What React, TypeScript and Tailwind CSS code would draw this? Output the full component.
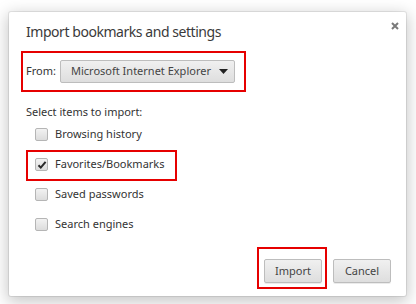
import React from "react";

const font = { fontFamily: '"Noto Sans", "Open Sans", sans-serif' };

function Checkbox({ checked }: { checked?: boolean }) {
  return (
    <div className="relative w-[13px] h-[13px] rounded-[2px] border border-[#b5b5b5] bg-gradient-to-b from-[#f2f2f2] to-[#dcdcdc] shrink-0">
      {checked && (
        <svg className="absolute left-[1px] top-[1px]" width="10" height="10" viewBox="0 0 10 10">
          <path d="M1.5 5.2 L3.8 7.6 L8.6 1.8" fill="none" stroke="#2a2a2a" strokeWidth="2" />
        </svg>
      )}
    </div>
  );
}

function Row({ label, checked }: { label: string; checked?: boolean }) {
  return (
    <div className="flex items-center h-[30px] pl-[9px] gap-[7px]">
      <Checkbox checked={checked} />
      <span className="text-[11px] text-[#333] leading-[16px] whitespace-nowrap">{label}</span>
    </div>
  );
}

function Button({ children }: { children: React.ReactNode }) {
  return (
    <div className="w-[58px] h-[24px] flex items-center justify-center rounded-[2px] border border-[#bdbdbd] bg-gradient-to-b from-[#f0f0f0] to-[#dedede] shadow-[0_1px_0_rgba(0,0,0,0.08)] text-[11px] text-[#444]">
      {children}
    </div>
  );
}

export default function App() {
  return (
    <div className="w-[416px] h-[304px] bg-white pl-[9px] pt-[12px] overflow-hidden" style={font}>
      <div className="relative w-[397px] h-[284px] bg-white rounded-[2px] shadow-[0_0_0_1px_rgba(0,0,0,0.08),0_4px_16px_2px_rgba(0,0,0,0.22)] flex flex-col">
        {/* close */}
        <svg className="absolute left-[382px] top-[10px]" width="8" height="8" viewBox="0 0 8 8">
          <path d="M1 1 L7 7 M7 1 L1 7" stroke="#7a7a7a" strokeWidth="2" />
        </svg>

        <div className="pl-[17px] mt-[10px] h-[20px] leading-[20px] text-[14px] tracking-[-0.45px] text-[#3a3a3a] whitespace-nowrap">
          Import bookmarks and settings
        </div>

        <div className="pl-[17px] mt-[18px] h-[23px] flex items-center">
          <span className="text-[11px] text-[#333] w-[34px]">From:</span>
          <div className="w-[175px] h-[23px] rounded-[2px] border border-[#bdbdbd] bg-gradient-to-b from-[#f0f0f0] to-[#dedede] flex items-center pl-[10px] pr-[6px] justify-between">
            <span className="text-[11px] text-[#444] whitespace-nowrap">Microsoft Internet Explorer</span>
            <svg width="9" height="5" viewBox="0 0 9 5">
              <path d="M0 0 H9 L4.5 5 Z" fill="#222" />
            </svg>
          </div>
        </div>

        <div className="pl-[17px] mt-[22px] h-[14px] leading-[14px] text-[11px] text-[#333] whitespace-nowrap">
          Select items to import:
        </div>

        <div className="pl-[17px] flex flex-col">
          <Row label="Browsing history" />
          <Row label="Favorites/Bookmarks" checked />
          <Row label="Saved passwords" />
          <Row label="Search engines" />
        </div>

        <div className="mt-auto flex justify-end gap-[11px] pr-[15px] pb-[13px]">
          <Button>Import</Button>
          <Button>Cancel</Button>
        </div>

        {/* annotation boxes */}
        <div className="absolute left-[12px] top-[39px] w-[225px] h-[41px] border-2 border-[#e60000] pointer-events-none" />
        <div className="absolute left-[17px] top-[138px] w-[151px] h-[31px] border-2 border-[#e60000] pointer-events-none" />
        <div className="absolute left-[248px] top-[235px] w-[70px] h-[42px] border-2 border-[#e60000] pointer-events-none" />
      </div>
    </div>
  );
}
